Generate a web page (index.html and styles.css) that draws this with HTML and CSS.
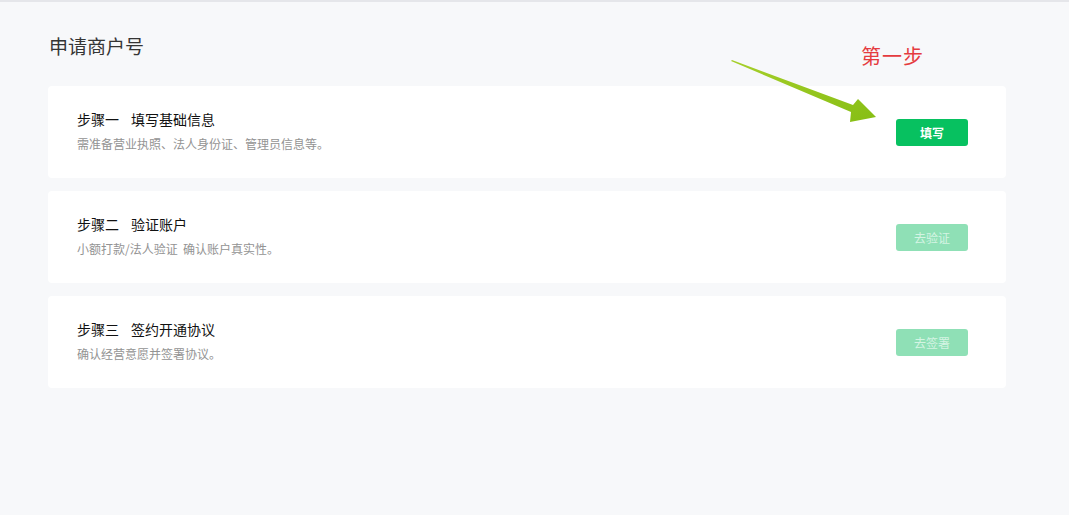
FILE: index.html
```html
<!DOCTYPE html>
<html lang="zh-CN">
<head>
    <meta charset="UTF-8">
    <meta name="viewport" content="width=device-width, initial-scale=1.0">
    <title>申请商户号</title>
    <link rel="stylesheet" href="styles.css">
</head>
<body>
    <!-- Page -->
    <div class="page">
        <h1 class="page-title">申请商户号</h1>

        <!-- Steps -->
        <div class="steps">
            <div class="step-card">
                <div class="step-info">
                    <div class="step-title"><span class="step-no">步骤一</span>填写基础信息</div>
                    <div class="step-desc">需准备营业执照、法人身份证、管理员信息等。</div>
                </div>
                <button class="step-btn">填写</button>
            </div>

            <div class="step-card">
                <div class="step-info">
                    <div class="step-title"><span class="step-no">步骤二</span>验证账户</div>
                    <div class="step-desc">小额打款/法人验证&nbsp;&nbsp;确认账户真实性。</div>
                </div>
                <button class="step-btn disabled">去验证</button>
            </div>

            <div class="step-card">
                <div class="step-info">
                    <div class="step-title"><span class="step-no">步骤三</span>签约开通协议</div>
                    <div class="step-desc">确认经营意愿并签署协议。</div>
                </div>
                <button class="step-btn disabled">去签署</button>
            </div>
        </div>

        <!-- Annotation over the page -->
        <div class="note-text">第一步</div>
        <svg class="note-arrow" width="160" height="75" viewBox="0 0 160 75">
            <defs>
                <linearGradient id="arrowFill" x1="0" y1="0" x2="1" y2="1">
                    <stop offset="0" stop-color="#a6cf2a"/>
                    <stop offset="1" stop-color="#86be14"/>
                </linearGradient>
            </defs>
            <polygon points="7,5 128,50 133,44 151,62 125,67 126,57 6,6" fill="url(#arrowFill)"/>
        </svg>
    </div>
</body>
</html>
```

FILE: styles.css
```css
/* Base */
body {
    margin: 0;
    padding: 0;
    background-color: #f7f8fa;
    border-top: 2px solid #e5e6ea;
    font-family: "Noto Sans CJK SC", "Liberation Sans", sans-serif;
    color: #000;
    min-height: 513px;
}

.page {
    position: relative;
    width: 958px;
    padding: 30px 0 0 48px;
}

/* Title */
.page-title {
    margin: 0 0 26px 1px;
    font-size: 19px;
    line-height: 28px;
    font-weight: normal;
    color: #353535;
}

/* Step cards */
.steps {
    display: flex;
    flex-direction: column;
    gap: 13px;
}

.step-card {
    height: 92px;
    display: flex;
    align-items: center;
    justify-content: space-between;
    padding: 0 38px 0 29px;
    background-color: #fff;
    border-radius: 4px;
}

.step-info {
    display: flex;
    flex-direction: column;
    gap: 6px;
    margin-top: -2px;
}

.step-title {
    font-size: 14px;
    line-height: 20px;
    color: #111;
}

.step-no {
    margin-right: 12px;
}

.step-desc {
    font-size: 12px;
    line-height: 18px;
    color: #939393;
}

/* Buttons */
.step-btn {
    width: 72px;
    height: 27px;
    border: none;
    border-radius: 3px;
    background-color: #07c160;
    color: #fff;
    font-family: inherit;
    font-size: 12px;
    font-weight: bold;
    cursor: pointer;
    padding: 0;
}

.step-btn.disabled {
    background-color: #8fe0b6;
    color: #d4f4e3;
    font-weight: normal;
    cursor: default;
}

/* Red annotation */
.note-text {
    position: absolute;
    left: 861px;
    top: 40px;
    font-size: 20px;
    line-height: 28px;
    color: #e53b3f;
    letter-spacing: 1px;
}

.note-arrow {
    position: absolute;
    left: 725px;
    top: 53px;
}
```
